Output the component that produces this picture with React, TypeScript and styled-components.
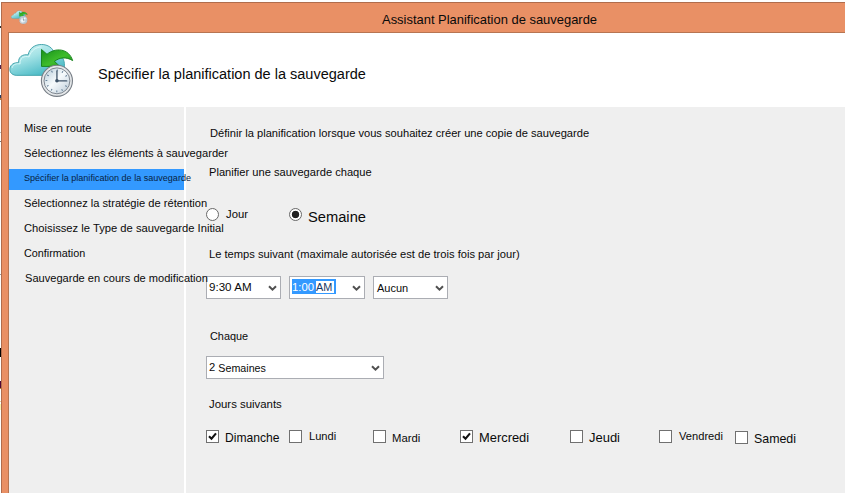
import React from 'react';
import styled, { createGlobalStyle } from 'styled-components';

const GlobalStyle = createGlobalStyle`
  * { box-sizing: border-box; }
  body {
    margin: 0;
    overflow: hidden;
    background: #fff;
    color: #0a0a0a;
    font-family: "Liberation Sans", Arial, sans-serif;
  }
`;

const Desktop = styled.div`
  display: flex;
  width: 845px;
  height: 493px;
  padding-top: 2px;
`;

const DesktopEdge = styled.div`
  flex: 0 0 1px;
  background: linear-gradient(
    #fff 24px, #333 24px 26px, #fff 26px 63px, #54204c 63px 67px, #fff 67px 93px,
    #243a63 93px 96px, #b5793c 96px 98px, #fff 98px 130px, #bbb 130px 131px,
    #fff 131px 139px, #777 139px 140px, #fff 140px 272px, #999 272px 273px,
    #fff 273px 346px, #000 346px 355px, #fff 355px 379px, #4e0735 379px 386px,
    #c08a28 386px 387px, #fff 387px 399px, #ebcf9b 399px 400px, #fff 400px 402px,
    #fbf6b0 402px 408px, #fff 408px
  );
`;

const Window = styled.div`
  display: flex;
  flex: 1;
  flex-direction: column;
  background: #e99065;
  border: solid #b06d4d;
  border-width: 1px 0 0 1px;
`;

const TitleBar = styled.header`
  display: flex;
  flex: 0 0 29px;
  padding: 7px 0 0 9px;
`;

const Text = styled.span<{ $size?: number; $line?: number }>`
  flex: none;
  font-size: ${({ $size = 11.13 }) => $size}px;
  line-height: ${({ $line = 16 }) => $line}px;
  white-space: pre;
`;

const WindowTitle = styled(Text)`
  margin: 2px 0 0 354px;
`;

const Client = styled.div`
  display: flex;
  flex: 1;
  flex-direction: column;
  margin-left: 6px;
  border: solid #b77552;
  border-width: 1px 0 0 1px;
  background: #fff;
`;

const Banner = styled.div`
  display: flex;
  flex: 0 0 74px;
`;

const BannerTitle = styled.h1`
  margin: 31px 0 0 23px;
  font-size: 14.52px;
  font-weight: 400;
  line-height: 20px;
`;

const Body = styled.div`
  display: flex;
  flex: 1;
  gap: 2px;
`;

const Sidebar = styled.nav`
  z-index: 1;
  display: flex;
  flex: none;
  width: 175px;
  min-width: 0;
  flex-direction: column;
  padding-top: 11px;
  background: #efefef;
`;

const Step = styled.div<{ $active?: boolean; $indent?: number }>`
  display: flex;
  flex: none;
  align-items: center;
  height: ${({ $active }) => ($active ? 21 : 25)}px;
  margin: ${({ $active }) => ($active ? '1px 0 3px' : '0')};
  padding: 0 0 ${({ $active }) => ($active ? 4 : 5)}px ${({ $indent = 15 }) => $indent}px;
  background: ${({ $active }) => ($active ? '#3399ff' : 'transparent')};
  color: ${({ $active }) => ($active ? '#082444' : '#0a0a0a')};
`;

const Form = styled.main`
  display: flex;
  flex: 1;
  min-width: 0;
  flex-direction: column;
  padding-left: 20px;
  background: #efefef;
`;

const Line = styled.div<{ $top: number; $indent?: number }>`
  display: flex;
  height: 16px;
  margin: ${({ $top }) => $top}px 0 0 ${({ $indent = 3 }) => $indent}px;
`;

const Radios = styled.div`
  display: grid;
  grid-template-columns: 83px 100px;
  height: 22px;
  margin-top: 28px;
`;

const Option = styled.label<{ $drop?: number; $gap?: number; $shift?: number }>`
  display: flex;
  align-items: flex-start;
  gap: ${({ $gap = 6 }) => $gap}px;
  padding-top: ${({ $shift = 0 }) => $shift}px;

  & > span { margin-top: ${({ $drop = 0 }) => $drop}px; }
`;

const Radio = styled.i<{ $on?: boolean }>`
  flex: none;
  width: 13px;
  height: 13px;
  border: 1px solid #696969;
  border-radius: 50%;
  background: ${({ $on }) => ($on ? 'radial-gradient(circle, #222 3.4px, #fff 4.1px)' : '#fff')};
`;

const Selects = styled.div<{ $top: number }>`
  display: flex;
  gap: 8px;
  height: 23px;
  margin-top: ${({ $top }) => $top}px;
`;

const SelectBox = styled.div<{ $width: number; $pad?: number }>`
  display: flex;
  align-items: flex-start;
  flex: none;
  width: ${({ $width }) => $width}px;
  height: 23px;
  padding: 2px 3px 0 ${({ $pad = 2 }) => $pad}px;
  border: 1px solid #abadb3;
  background: #fff;

  & > svg { margin: 6px 0 0 auto; }
`;

const Lowered = styled(Text)`
  margin-top: 1px;
`;

const Highlight = styled.span`
  display: flex;
  height: 15px;
  width: 44px;
  background: #3399ff;
  color: #fff;
`;

const Meridiem = styled(Text)`
  width: 18px;
  height: 12px;
  margin: 2px 0 0 2px;
  background: #fff;
  color: #173765;
`;

const Days = styled.div`
  display: grid;
  grid-template-columns: 83px 84px 87px 110px 89px 76px auto;
  margin-top: 18px;
`;

const Box = styled.i`
  display: flex;
  flex: none;
  width: 13px;
  height: 13px;
  border: 1px solid #707070;
  background: #fff;
`;

const Chevron = () => (
  <svg width="9" height="7" viewBox="0 0 9 7">
    <path d="M1 1.2 4.5 4.7 8 1.2" fill="none" stroke="#505050" strokeWidth="2" />
  </svg>
);

const Check = () => (
  <svg width="11" height="11" viewBox="0 0 11 11">
    <path d="M2 5.2 4.5 7.7 9 2.4" fill="none" stroke="#111" strokeWidth="2.1" />
  </svg>
);

const BackupIcon = ({ size, id }: { size: number; id: string }) => (
  <svg width={size} height={size * 0.86} viewBox="0 0 66 57">
    <defs>
      <linearGradient id={id + 'c'} x1="0" y1="0" x2=".6" y2="1">
        <stop offset="0" stopColor="#d9f7f7" />
        <stop offset=".45" stopColor="#a5e3e6" />
        <stop offset="1" stopColor="#46b8c4" />
      </linearGradient>
      <linearGradient id={id + 'a'} x1="0" y1="0" x2="1" y2="1">
        <stop offset="0" stopColor="#159018" />
        <stop offset=".55" stopColor="#3fbd2c" />
        <stop offset="1" stopColor="#168918" />
      </linearGradient>
      <linearGradient id={id + 'f'} x1="0" y1="0" x2="1" y2="1">
        <stop offset="0" stopColor="#b3cad8" />
        <stop offset=".48" stopColor="#f7fbfd" />
        <stop offset="1" stopColor="#b9c9d6" />
      </linearGradient>
    </defs>
    <path
      d="M7 33.5C2 33 .2 29.500 .8 26.500 1.500 22.500 5 20.500 9.500 20.800 9 15 13.500 12 19 13 20.500 6 26 2.500 32.500 2.500 39 2.500 44 6 45.500 11.500 52 12 56 17 55.500 24 55.500 30 52 33.500 46 33.500Z"
      fill={`url(#${id}c)`}
      stroke="#45a4ad"
      strokeWidth="1"
    />
    <path d="M3 26C4 22 8 21.500 11 22 10.500 16 15 13.500 20 15 22 8.500 27 5 32.500 5" fill="none" stroke="#e9ffff" strokeOpacity=".7" />
    <path
      d="M32.500 7.500 38 12.300C46 5.500 60 6 63.800 18.700 57 14.500 50.500 15.500 45.500 19.500L51 24.500H32.500Z"
      fill={`url(#${id}a)`}
      stroke="#128017"
      strokeWidth=".9"
    />
    <circle cx="48" cy="39" r="15.600" fill="#e4e7e9" stroke="#777e86" strokeWidth="1.100" />
    <circle cx="48" cy="39" r="13" fill={`url(#${id}f)`} stroke="#7d858e" strokeWidth="1" />
    <circle cx="48" cy="39" r="10.500" fill="none" stroke="#5c7891" strokeWidth="1.800" strokeDasharray="1 4.498" strokeDashoffset=".5" />
    <path d="M48 28.500V39H58" fill="none" stroke="#3e5368" strokeWidth="1.300" />
    <circle cx="48" cy="39" r="1.800" fill="#3e5368" />
  </svg>
);

const BannerIcon = styled.div`
  flex: none;
  width: 66px;
  padding-top: 9px;
`;

const steps: { label: string; active?: boolean; indent?: number; size?: number }[] = [
  { label: 'Mise en route' },
  { label: 'Sélectionnez les éléments à sauvegarder', size: 11.16 },
  { label: 'Spécifier la planification de la sauvegarde', active: true, size: 9.05 },
  { label: 'Sélectionnez la stratégie de rétention' },
  { label: 'Choisissez le Type de sauvegarde Initial', size: 11.21 },
  { label: 'Confirmation', size: 10.8 },
  { label: 'Sauvegarde en cours de modification', indent: 16, size: 11.08 },
];

const days: { label: string; on?: boolean; size?: number; drop: number; gap?: number; shift?: number }[] = [
  { label: 'Dimanche', on: true, size: 12.1, drop: 0 },
  { label: 'Lundi', drop: -2, gap: 7 },
  { label: 'Mardi', size: 11.3, drop: 0 },
  { label: 'Mercredi', on: true, size: 12.9, drop: 0 },
  { label: 'Jeudi', size: 12.97, drop: 0 },
  { label: 'Vendredi', size: 11.15, drop: -2, gap: 7 },
  { label: 'Samedi', size: 12.4, drop: 0, shift: 1 },
];

export default function App() {
  return (
    <>
      <GlobalStyle />
      <Desktop>
        <DesktopEdge />
        <Window>
          <TitleBar>
            <BackupIcon size={17} id="s" />
            <WindowTitle $size={12.94}>Assistant Planification de sauvegarde</WindowTitle>
          </TitleBar>
          <Client>
            <Banner>
              <BannerIcon><BackupIcon size={66} id="l" /></BannerIcon>
              <BannerTitle>Spécifier la planification de la sauvegarde</BannerTitle>
            </Banner>
            <Body>
              <Sidebar>
                {steps.map((s) => (
                  <Step key={s.label} $active={s.active} $indent={s.indent}>
                    <Text $size={s.size}>{s.label}</Text>
                  </Step>
                ))}
              </Sidebar>
              <Form>
                <Line $top={18} $indent={4}>
                  <Text>Définir la planification lorsque vous souhaitez créer une copie de sauvegarde</Text>
                </Line>
                <Line $top={23}><Text>Planifier une sauvegarde chaque</Text></Line>
                <Radios>
                  <Option $drop={-2} $gap={7}><Radio /><Text $size={11.3}>Jour</Text></Option>
                  <Option $drop={1}><Radio $on /><Text $size={14.7}>Semaine</Text></Option>
                </Radios>
                <Line $top={16}>
                  <Text $size={11.17}>Le temps suivant (maximale autorisée est de trois fois par jour)</Text>
                </Line>
                <Selects $top={14}>
                  <SelectBox $width={75}><Text $size={11.6}>9:30 AM</Text><Chevron /></SelectBox>
                  <SelectBox $width={76}>
                    <Highlight>
                      <Text $size={11.3}>1:00</Text>
                      <Meridiem $size={10.9} $line={13}>AM</Meridiem>
                    </Highlight>
                    <Chevron />
                  </SelectBox>
                  <SelectBox $width={75} $pad={3}><Lowered $size={11}>Aucun</Lowered><Chevron /></SelectBox>
                </Selects>
                <Line $top={29} $indent={4}><Text $size={10.9}>Chaque</Text></Line>
                <Selects $top={12}>
                  <SelectBox $width={178}>
                    <Text $size={11.2}>2 </Text>
                    <Lowered $size={10.7}>Semaines</Lowered>
                    <Chevron />
                  </SelectBox>
                </Selects>
                <Line $top={17}><Text $size={11.4}>Jours suivants</Text></Line>
                <Days>
                  {days.map((d) => (
                    <Option key={d.label} $drop={d.drop} $gap={d.gap} $shift={d.shift}>
                      <Box>{d.on && <Check />}</Box>
                      <Text $size={d.size}>{d.label}</Text>
                    </Option>
                  ))}
                </Days>
              </Form>
            </Body>
          </Client>
        </Window>
      </Desktop>
    </>
  );
}
